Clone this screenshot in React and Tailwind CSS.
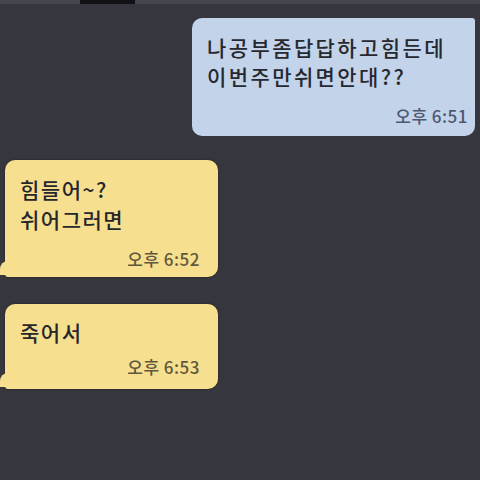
import React from 'react';

const font = "font-['Noto_Sans_CJK_KR','Noto_Sans',sans-serif]";

function YellowBubble({ lines, time, pt, mt, pb }) {
    return (
        <div className={`relative ml-[5px] w-[213px] bg-[#f6df8e] rounded-[10px] rounded-bl-[3px] pl-[15px] pr-[18px] ${pt} ${pb} shadow-[0_0_2px_rgba(0,0,0,0.5)]`}>
            <div className="text-[21px] leading-[30px] tracking-[1.5px] font-medium text-[#26272b]">
                {lines.map((l) => (
                    <div key={l}>{l}</div>
                ))}
            </div>
            <div className={`${mt} text-right text-[17px] leading-[20px] tracking-[0.5px] font-medium text-[#5f583d]`}>{time}</div>
            <div className="absolute left-[-5px] bottom-[2px] w-[8px] h-[14px] bg-[#f6df8e] rounded-tl-[8px]" />
        </div>
    );
}

export default function App() {
    return (
        <div className={`w-[480px] h-[480px] bg-[#36363e] overflow-hidden flex flex-col ${font}`}>
            <div className="h-[4px] flex bg-[#45464e]">
                <div className="ml-[80px] w-[55px] bg-[#121216]" />
            </div>

            <div className="self-end mt-[14px] mr-[5px] w-[283px] bg-[#c3d3ea] rounded-[10px] rounded-tr-[3px] pl-[15px] pr-[7px] pt-[15px] pb-[10px]">
                <div className="text-[21px] leading-[29px] tracking-[2.4px] font-medium text-[#26282f]">
                    <div>나공부좀답답하고힘든데</div>
                    <div>이번주만쉬면안대??</div>
                </div>
                <div className="mt-[15px] text-right text-[17px] leading-[20px] tracking-[0.5px] font-medium text-[#4e5870]">오후 6:51</div>
            </div>

            <div className="mt-[24px]">
                <YellowBubble lines={['힘들어~?', '쉬어그러면']} time="오후 6:52" pt="pt-[14px]" mt="mt-[15px]" pb="pb-[8px]" />
            </div>
            <div className="mt-[27px]">
                <YellowBubble lines={['죽어서']} time="오후 6:53" pt="pt-[13px]" mt="mt-[10px]" pb="pb-[12px]" />
            </div>
        </div>
    );
}
